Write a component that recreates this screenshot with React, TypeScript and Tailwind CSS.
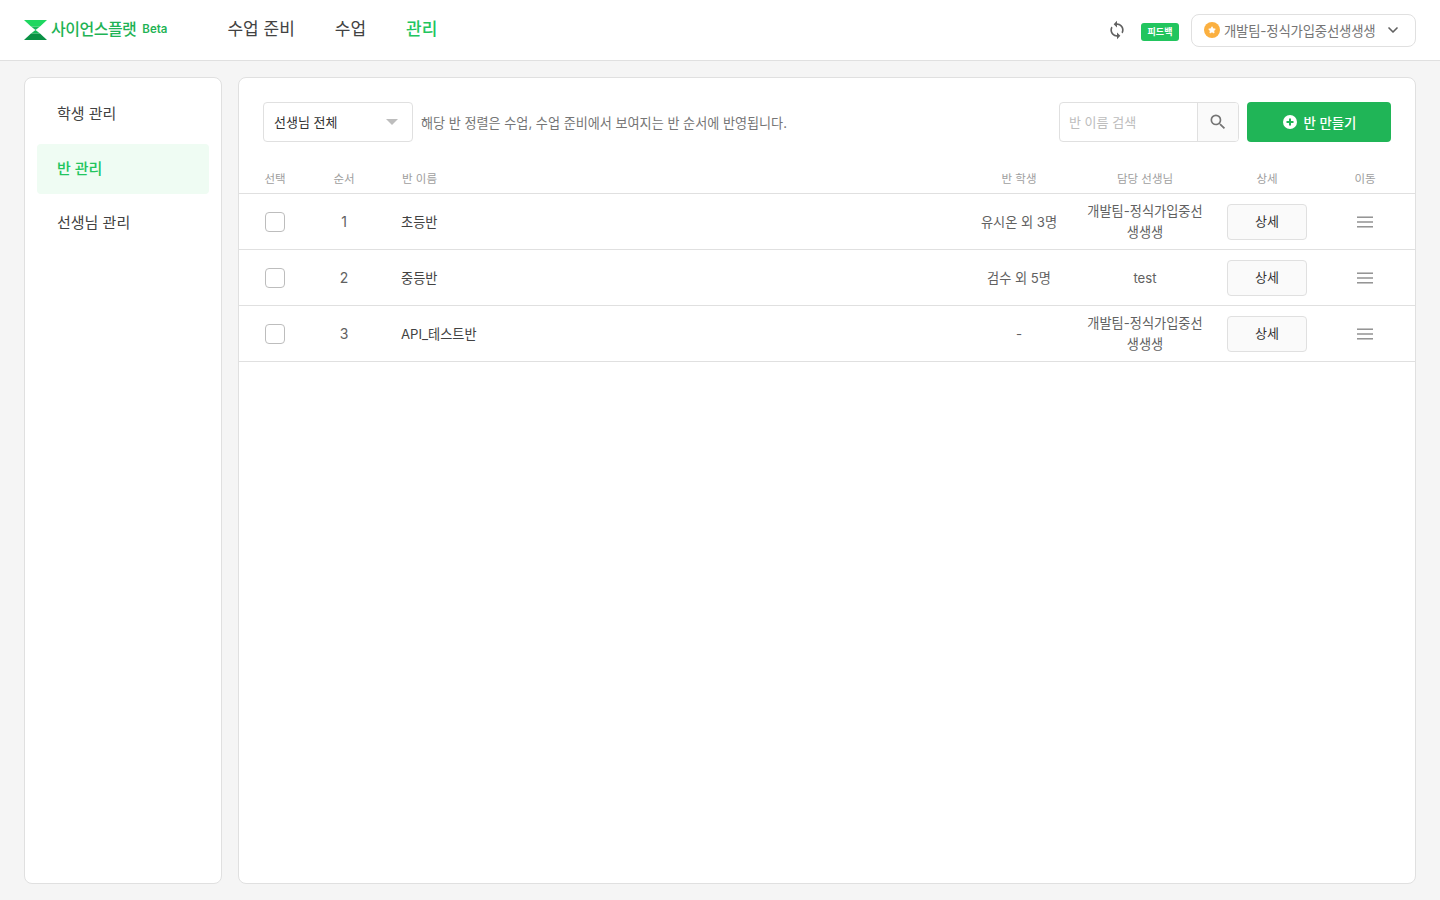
import { ChevronDown, Star } from 'lucide-react';
import { MdSearch, MdSync } from 'react-icons/md';

const font = 'font-["Inter","Noto_Sans_CJK_KR",sans-serif]';
const columns = 'grid grid-cols-[72px_66px_1fr_126px_126px_118px_78px] pr-[11px] items-center text-center';

const rows = [
  { order: 1, name: '초등반', students: '유시온 외 3명', teacher: '개발팀-정식가입중선생생생' },
  { order: 2, name: '중등반', students: '검수 외 5명', teacher: 'test' },
  { order: 3, name: 'API_테스트반', students: '-', teacher: '개발팀-정식가입중선생생생' },
];

function Logo() {
  return (
    <svg width="23" height="20" viewBox="0 0 23 20">
      <path d="M0 0H23L16 6.5H7Z" fill="#1ed760" />
      <path d="M7 6.5H16L11.5 10Z" fill="#17b95a" />
      <path d="M11.5 10L16 13.5H7Z" fill="#17b95a" />
      <path d="M7 13.5H16L23 20H0Z" fill="#0a9145" />
    </svg>
  );
}

function Header() {
  return (
    <header className="h-[61px] bg-white border-b border-[#e0e0e0] flex items-center pl-6 pr-6">
      <Logo />
      <span className="ml-1 mb-0.5 text-[16px] font-medium text-[#1fb355] tracking-[-0.5px]">사이언스플랫</span>
      <span className="ml-[6px] text-[11.5px] font-semibold text-[#1fb355]">Beta</span>
      <nav className="flex items-center ml-[60px] gap-10 text-[17px] text-[#424242]">
        <span>수업 준비</span>
        <span>수업</span>
        <span className="font-medium text-[#22c55e]">관리</span>
      </nav>
      <div className="ml-auto flex items-center">
        <MdSync className="w-5 h-5 text-[#616161]" />
        <span className="ml-[14px] mt-1 w-[38px] h-[18px] rounded-[3px] bg-[#22c55e] text-white text-[9px] font-semibold flex items-center justify-center">
          피드백
        </span>
        <button className="ml-3 w-[225px] h-[33px] rounded-lg border border-[#e0e0e0] flex items-center pl-3 pr-[14px] text-[13.4px] text-[#757575]">
          <span className="w-4 h-4 rounded-full bg-[#fbb040] flex items-center justify-center shrink-0">
            <Star className="w-2 h-2 text-white fill-white" />
          </span>
          <span className="ml-1 pt-0.5 whitespace-nowrap tracking-[-0.2px]">개발팀-정식가입중선생생생</span>
          <ChevronDown className="ml-auto w-4 h-4 text-[#616161]" strokeWidth={2.5} />
        </button>
      </div>
    </header>
  );
}

function Sidebar() {
  return (
    <aside className="w-[198px] bg-white border border-[#e0e0e0] rounded-lg px-3 pt-3 flex flex-col gap-1 text-[15px] text-[#424242]">
      <div className="h-[50px] pb-0.5 flex items-center pl-5">학생 관리</div>
      <div className="h-[50px] flex items-center pl-5 rounded bg-[#effcf3] font-medium text-[#22c55e]">반 관리</div>
      <div className="h-[50px] flex items-center pl-5">선생님 관리</div>
    </aside>
  );
}

function Toolbar() {
  return (
    <div className="flex items-center pl-6 pr-6 pt-6">
      <div className="w-[150px] h-10 border border-[#e0e0e0] rounded flex items-center pl-[10px] pr-[14px] pt-px text-[13px] text-[#333333]">
        선생님 전체
        <span className="ml-auto mb-0.5 w-0 h-0 border-x-[6px] border-x-transparent border-t-[6px] border-t-[#bdbdbd]" />
      </div>
      <p className="ml-2 pt-[3px] text-[13.1px] text-[#757575]">해당 반 정렬은 수업, 수업 준비에서 보여지는 반 순서에 반영됩니다.</p>
      <div className="ml-auto w-[180px] h-10 border border-[#e0e0e0] rounded flex overflow-hidden">
        <span className="flex-1 flex items-center pl-[9px] pt-px text-[13px] text-[#bdbdbd]">반 이름 검색</span>
        <span className="w-[41px] bg-[#fafafa] border-l border-[#e0e0e0] flex items-center justify-center">
          <MdSearch className="w-5 h-5 text-[#757575]" />
        </span>
      </div>
      <button className="ml-2 w-36 h-10 pl-px rounded bg-[#20b557] flex items-center justify-center gap-[7px] text-white text-[13.4px] font-medium">
        <svg width="14" height="14" viewBox="0 0 14 14">
          <circle cx="7" cy="7" r="7" fill="#fff" />
          <path d="M7 3.5V10.5M3.5 7H10.5" stroke="#20b557" strokeWidth="2" />
        </svg>
        <span className="pt-0.5">반 만들기</span>
      </button>
    </div>
  );
}

function DragHandle() {
  return (
    <svg width="16" height="12" viewBox="0 0 16 12" fill="#8a8a8a">
      <rect y="0.5" width="16" height="1.4" />
      <rect y="5.3" width="16" height="1.4" />
      <rect y="10.1" width="16" height="1.4" />
    </svg>
  );
}

function ClassTable() {
  return (
    <div className="mt-[22px]">
      <div className={`${columns} h-[30px] pt-0.5 border-b border-[#e0e0e0] text-[11.5px] text-[#9e9e9e]`}>
        <span>선택</span>
        <span>순서</span>
        <span className="text-left pl-[25px]">반 이름</span>
        <span>반 학생</span>
        <span>담당 선생님</span>
        <span>상세</span>
        <span>이동</span>
      </div>
      {rows.map((row) => (
        <div key={row.order} className={`${columns} h-14 border-b border-[#e0e0e0] text-[13.2px] text-[#616161]`}>
          <span className="flex justify-center">
            <span className="w-5 h-5 rounded border border-[#bdbdbd] bg-white" />
          </span>
          <span className="text-[14px]">{row.order}</span>
          <span className="text-left pl-6 pt-0.5 text-[#424242]">{row.name}</span>
          <span className="pt-0.5">{row.students}</span>
          <span className="px-[3px] pt-px leading-[21px] break-all">{row.teacher}</span>
          <span className="flex justify-center">
            <button className="w-20 h-9 pt-px rounded border border-[#e0e0e0] bg-[#fafafa] text-[13px] text-[#333333]">상세</button>
          </span>
          <span className="flex justify-center">
            <DragHandle />
          </span>
        </div>
      ))}
    </div>
  );
}

export default function App() {
  return (
    <div className={`${font} w-full h-[900px] bg-[#f5f5f5] flex flex-col overflow-hidden`}>
      <Header />
      <main className="flex-1 flex gap-4 pt-4 px-6 pb-4">
        <Sidebar />
        <section className="flex-1 bg-white border border-[#e0e0e0] rounded-lg">
          <Toolbar />
          <ClassTable />
        </section>
      </main>
    </div>
  );
}
